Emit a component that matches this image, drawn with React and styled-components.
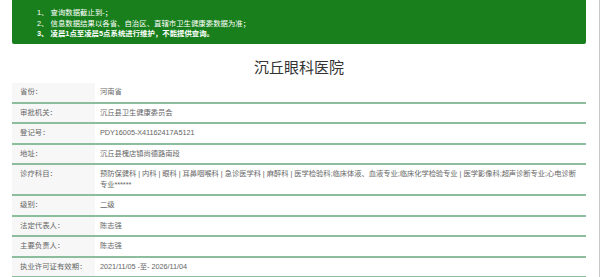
import React from "react";
import styled, { createGlobalStyle } from "styled-components";

const GlobalStyle = createGlobalStyle`
  html, body {
    margin: 0;
    padding: 0;
    background: #fff;
  }
  body {
    font-family: "Liberation Sans", "Noto Sans CJK SC", sans-serif;
  }
`;

const notices = [
  { text: "1、 查询数据截止到-；" },
  { text: "2、 信息数据结果以各省、自治区、直辖市卫生健康委数据为准；" },
  { text: "3、 凌晨1点至凌晨5点系统进行维护，不能提供查询。", bold: true },
];

const rows = [
  { label: "省份：", value: "河南省" },
  { label: "审批机关：", value: "沉丘县卫生健康委员会" },
  { label: "登记号：", value: "PDY16005-X41162417A5121" },
  { label: "地址：", value: "沉丘县槐店镇尚德路南段" },
  {
    label: "诊疗科目：",
    value:
      "预防保健科 | 内科 | 眼科 | 耳鼻咽喉科 | 急诊医学科 | 麻醉科 | 医学检验科;临床体液、血液专业;临床化学检验专业 | 医学影像科;超声诊断专业;心电诊断专业******",
  },
  { label: "级别：", value: "二级" },
  { label: "法定代表人：", value: "陈志强" },
  { label: "主要负责人：", value: "陈志强" },
  { label: "执业许可证有效期：", value: "2021/11/05 -至- 2026/11/04" },
];

const Page = styled.div`
  width: 600px;
  min-height: 277px;
  box-sizing: border-box;
  padding: 0 13px 0 12px;
  border-right: 1px solid #c9c9c9;
`;

const Notice = styled.div`
  background: #187f1c;
  border-radius: 0 0 2px 2px;
  padding: 8px 25px 5px;
  height: 44px;
  box-sizing: border-box;
`;

const NoticeLine = styled.p`
  margin: 0;
  color: #fff;
  font-size: 7.4px;
  line-height: 10.6px;
  font-weight: ${(p) => (p.$bold ? 700 : 400)};
`;

const Title = styled.h1`
  margin: 14px 0 5px;
  text-align: center;
  font-size: 15px;
  line-height: 20px;
  font-weight: 400;
  color: #333;
`;

const Table = styled.div`
  display: flex;
  flex-direction: column;
`;

const Row = styled.div`
  display: grid;
  grid-template-columns: 83px 1fr;
  border-bottom: 2px solid #8cbe9e;
`;

const Label = styled.div`
  background: #f7f7f7;
  padding: 4px 6px 4px 8px;
  font-size: 7.4px;
  line-height: 10.5px;
  color: #666;
`;

const Value = styled.div`
  padding: 4px 5px 4px 5px;
  font-size: 7.3px;
  line-height: 10.5px;
  letter-spacing: -0.05px;
  color: #666;
`;

export default function App() {
  return (
    <>
      <GlobalStyle />
      <Page>
        <Notice>
          {notices.map((n) => (
            <NoticeLine key={n.text} $bold={n.bold}>
              {n.text}
            </NoticeLine>
          ))}
        </Notice>
        <Title>沉丘眼科医院</Title>
        <Table>
          {rows.map((r) => (
            <Row key={r.label}>
              <Label>{r.label}</Label>
              <Value>{r.value}</Value>
            </Row>
          ))}
        </Table>
      </Page>
    </>
  );
}
